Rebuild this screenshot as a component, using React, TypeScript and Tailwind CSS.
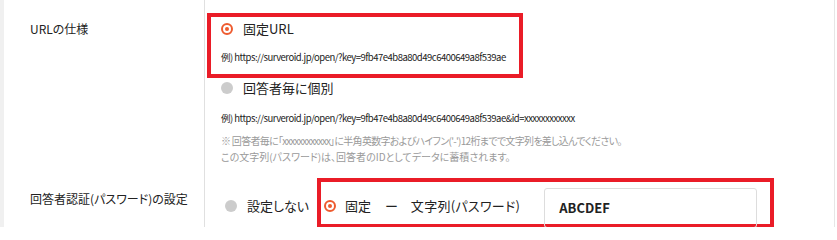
import React from 'react';

const jp = "font-['Noto_Sans_CJK_JP','Noto_Sans',sans-serif] [font-feature-settings:'palt']";

function Radio({ on }: { on?: boolean }) {
  return on ? (
    <span className="w-[12px] h-[12px] rounded-full border-2 border-[#ee5b2f] flex items-center justify-center shrink-0">
      <span className="w-[4px] h-[4px] rounded-full bg-[#ee5b2f]" />
    </span>
  ) : (
    <span className="w-[12px] h-[12px] rounded-full bg-[#cccccc] shrink-0" />
  );
}

export default function App() {
  return (
    <div className={`w-[837px] h-[227px] overflow-hidden bg-white flex text-[#222] ${jp}`}>
      <div className="w-[4px] bg-[#f0f0f0] shrink-0" />
      <div className="w-[831px] border-r border-[#e6e6e6] flex flex-col">
        {/* URL row */}
        <div className="flex">
          <div className="w-[201px] border-r border-[#e0e0e0] pl-[26px] pt-[20px] text-[12px] leading-[18px]">
            URLの仕様
          </div>
          <div className="flex-1 pt-[13px]">
            <div className="ml-[2px] w-[316px] h-[65px] border-4 border-[#ea1c27] pl-[10px] pt-[2px]">
              <div className="flex items-center gap-[10px] h-[18px] mt-[1px]">
                <Radio on />
                <span className="text-[13px]">固定URL</span>
              </div>
              <div className="mt-[12px] text-[9.5px] leading-[14px] tracking-[-0.5px] whitespace-nowrap">
                例) https://surveroid.jp/open/?key=9fb47e4b8a80d49c6400649a8f539ae
              </div>
            </div>
            <div className="ml-[16px] flex items-center gap-[10px] h-[18px] mt-[1px]">
              <Radio />
              <span className="text-[13px]">回答者毎に個別</span>
            </div>
            <div className="ml-[16px] mt-[14px] text-[9.5px] leading-[14px] tracking-[-0.5px] whitespace-nowrap">
              例) https://surveroid.jp/open/?key=9fb47e4b8a80d49c6400649a8f539ae&amp;id=xxxxxxxxxxxx
            </div>
            <div className="ml-[16px] mt-[8px] text-[10px] leading-[16px] text-[#9a9a9a] whitespace-nowrap">
              <p className="tracking-[-0.7px]">
                ※ 回答者毎に「<span className="tracking-[-1px]">xxxxxxxxxxxx</span>」に半角英数字およびハイフン('-')12桁までで文字列を差し込んでください。
              </p>
              <p>この文字列(パスワード)は、回答者のIDとしてデータに蓄積されます。</p>
            </div>
          </div>
        </div>
        {/* password row */}
        <div className="flex flex-1">
          <div className="w-[201px] border-r border-[#e0e0e0] pl-[26px] pt-[25px] text-[12px] leading-[18px]">
            回答者認証(パスワード)の設定
          </div>
          <div className="flex-1 pt-[13px] flex items-start">
            <div className="flex items-center gap-[10px] ml-[20px] mt-[19px] h-[18px]">
              <Radio />
              <span className="text-[13px]">設定しない</span>
            </div>
            <div className="ml-[8px] w-[457px] h-[50px] border-4 border-[#ea1c27] pl-[3px] pt-[6px] flex items-start">
              <div className="flex items-center h-[36px]">
                <Radio on />
                <span className="text-[13px] ml-[9px]">固定</span>
                <span className="text-[13px] ml-[14px]">ー</span>
                <span className="text-[13px] ml-[13px] tracking-[0.3px]">文字列(パスワード)</span>
              </div>
              <div className="ml-[24px] w-[213px] h-[40px] border border-[#dddddd] rounded-[3px] pl-[14px] flex items-center text-[13px] font-semibold">
                ABCDEF
              </div>
            </div>
          </div>
        </div>
      </div>
      <div className="w-[1px] bg-white" />
    </div>
  );
}
